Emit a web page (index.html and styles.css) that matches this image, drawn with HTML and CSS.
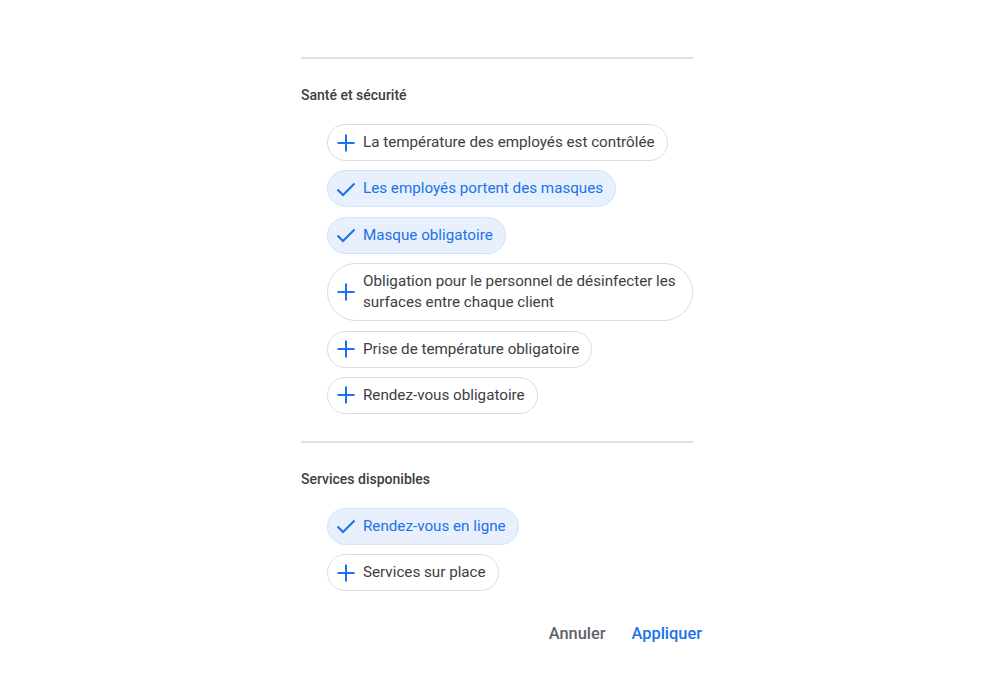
FILE: index.html
```html
<!DOCTYPE html>
<html lang="fr">
<head>
  <meta charset="UTF-8" />
  <meta name="viewport" content="width=device-width, initial-scale=1" />
  <title>Attributs</title>
  <link rel="stylesheet" href="styles.css">
</head>
<body>
  <div class="panel">
    <hr class="divider">

    <section class="group">
      <h3>Santé et sécurité</h3>
      <div class="chips">
        <button class="chip"><span class="icon plus"></span><span>La température des employés est contrôlée</span></button>
        <button class="chip selected"><span class="icon check"></span><span>Les employés portent des masques</span></button>
        <button class="chip selected"><span class="icon check"></span><span>Masque obligatoire</span></button>
        <button class="chip"><span class="icon plus"></span><span>Obligation pour le personnel de désinfecter les surfaces entre chaque client</span></button>
        <button class="chip"><span class="icon plus"></span><span>Prise de température obligatoire</span></button>
        <button class="chip"><span class="icon plus"></span><span>Rendez-vous obligatoire</span></button>
      </div>
    </section>

    <hr class="divider">

    <section class="group">
      <h3>Services disponibles</h3>
      <div class="chips">
        <button class="chip selected"><span class="icon check"></span><span>Rendez-vous en ligne</span></button>
        <button class="chip"><span class="icon plus"></span><span>Services sur place</span></button>
      </div>
    </section>

    <div class="actions">
      <button class="text-btn">Annuler</button>
      <button class="text-btn primary">Appliquer</button>
    </div>
  </div>

  <script>
    const plus = '<svg width="18" height="18" viewBox="0 0 18 18"><path d="M9 0.5v17M0.5 9h17" fill="none" stroke="#1a73e8" stroke-width="2"/></svg>';
    const check = '<svg width="18" height="18" viewBox="0 0 18 18"><path d="M0.5 9.5L6 15L17.5 3.5" fill="none" stroke="#1a73e8" stroke-width="2"/></svg>';
    document.querySelectorAll('.icon.plus').forEach(el => el.innerHTML = plus);
    document.querySelectorAll('.icon.check').forEach(el => el.innerHTML = check);
    document.querySelectorAll('.chip').forEach(chip => {
      chip.addEventListener('click', () => {
        chip.classList.toggle('selected');
        chip.querySelector('.icon').innerHTML = chip.classList.contains('selected') ? check : plus;
      });
    });
  </script>
</body>
</html>
```

FILE: styles.css
```css
body {
  margin: 0;
  background: #fff;
  font-family: Roboto, 'Noto Sans', sans-serif;
  color: #3c4043;
}

.panel {
  width: 392px;
  margin-left: 301px;
  padding-top: 57px;
}

.divider {
  border: none;
  border-top: 2px solid #e0e1e3;
  margin: 0;
}

.group {
  padding: 26px 0 27px;
}

.group h3 {
  margin: 0 0 19px;
  font-size: 14px;
  font-weight: 500;
  line-height: 20px;
  color: #3c4043;
}

.chips {
  padding-left: 26px;
  display: flex;
  flex-direction: column;
  align-items: flex-start;
  gap: 9.4px;
}

.chip {
  display: flex;
  align-items: center;
  gap: 8px;
  max-width: 100%;
  padding: 7px 12px 7px 9px;
  border: 1px solid #dadce0;
  border-radius: 30px;
  background: #fff;
  font-family: inherit;
  font-size: 15.2px;
  line-height: 21px;
  color: #3c4043;
  text-align: left;
  cursor: pointer;
}

.chip.selected {
  background: #e8f0fe;
  border-color: #d2e3fc;
  color: #1a73e8;
}

.icon {
  display: flex;
  flex: none;
  width: 18px;
  height: 18px;
}

.actions {
  display: flex;
  justify-content: flex-end;
  gap: 10px;
  margin-right: -17px;
  margin-top: -2px;
}

.text-btn {
  background: none;
  border: none;
  padding: 8px;
  font-family: inherit;
  font-size: 16.4px;
  font-weight: 500;
  color: #5f6368;
  cursor: pointer;
}

.text-btn.primary {
  color: #1a73e8;
}
```
